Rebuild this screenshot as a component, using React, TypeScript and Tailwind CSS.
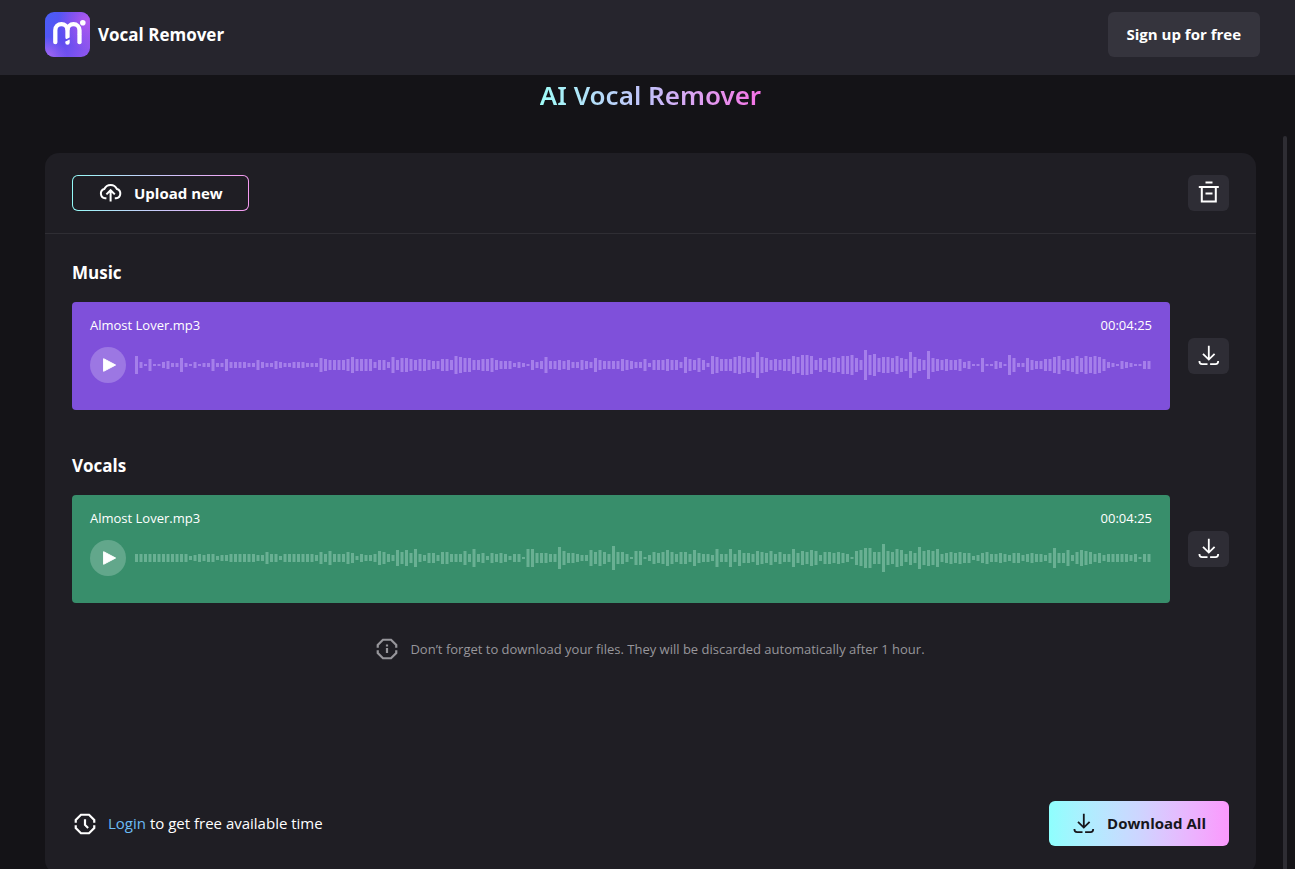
import React from 'react';

const musicLevels = [
  18, 6, 2, 12, 2, 2, 6, 8, 4, 4, 14, 4, 2, 6, 2, 4, 4, 12, 4, 4, 12, 6, 6, 6, 6, 4, 4, 10, 6, 4,
  4, 8, 6, 4, 4, 6, 6, 6, 4, 4, 4, 14, 12, 10, 10, 10, 10, 12, 16, 12, 12, 12, 12, 6, 10, 10, 6, 16, 10, 14,
  14, 12, 10, 12, 12, 10, 8, 8, 12, 12, 10, 18, 16, 14, 14, 10, 10, 12, 12, 14, 10, 8, 8, 8, 4, 6, 4, 2, 10, 6,
  8, 16, 8, 8, 10, 8, 10, 6, 6, 10, 8, 6, 14, 10, 8, 8, 8, 8, 12, 10, 8, 6, 6, 12, 4, 10, 10, 10, 12, 10,
  10, 6, 16, 12, 10, 14, 10, 4, 18, 16, 12, 12, 12, 16, 18, 16, 14, 16, 26, 16, 14, 10, 12, 10, 12, 12, 18, 16, 20, 20,
  18, 10, 14, 10, 14, 16, 14, 18, 18, 20, 14, 10, 30, 20, 22, 14, 16, 16, 14, 18, 14, 12, 26, 16, 12, 10, 28, 14, 12, 10,
  12, 10, 10, 12, 6, 8, 2, 2, 14, 2, 2, 8, 6, 2, 20, 14, 4, 4, 14, 10, 8, 8, 12, 12, 16, 18, 10, 12, 14, 18,
  14, 18, 16, 18, 16, 12, 6, 4, 2, 8, 6, 4, 2, 2, 8, 8,
];

const vocalLevels = [
  8, 8, 8, 8, 8, 8, 8, 8, 8, 8, 8, 8, 4, 6, 8, 6, 8, 8, 4, 6, 6, 8, 8, 8, 8, 8, 8, 6, 6, 12,
  8, 8, 4, 8, 8, 8, 8, 8, 8, 8, 6, 12, 8, 14, 8, 8, 8, 12, 10, 4, 8, 6, 6, 8, 14, 12, 8, 6, 16, 12,
  16, 10, 18, 8, 6, 10, 10, 6, 12, 12, 8, 8, 8, 14, 8, 18, 8, 10, 4, 10, 8, 10, 8, 4, 8, 8, 2, 18, 18, 10,
  10, 10, 8, 8, 22, 14, 10, 10, 8, 6, 6, 16, 12, 16, 12, 8, 24, 12, 12, 8, 2, 14, 14, 2, 6, 12, 10, 12, 16, 12,
  8, 12, 12, 8, 16, 10, 8, 8, 6, 18, 8, 8, 18, 8, 16, 10, 10, 8, 14, 12, 10, 14, 8, 12, 8, 8, 18, 10, 14, 12,
  16, 14, 6, 12, 12, 10, 12, 10, 8, 2, 14, 16, 20, 20, 12, 12, 28, 14, 12, 18, 16, 8, 14, 10, 22, 14, 16, 14, 18, 8,
  10, 12, 10, 12, 10, 10, 4, 6, 10, 12, 8, 8, 10, 8, 6, 10, 10, 6, 8, 10, 8, 8, 6, 10, 20, 10, 10, 16, 6, 12,
  16, 14, 12, 8, 10, 6, 8, 8, 8, 8, 8, 6, 8, 2, 8, 8,
];

const tracks = [
  { title: 'Music', file: 'Almost Lover.mp3', time: '00:04:25', levels: musicLevels, card: 'bg-[#7f50da]', bars: 'text-[#a57fea]', play: 'bg-[#9c77e3]' },
  { title: 'Vocals', file: 'Almost Lover.mp3', time: '00:04:25', levels: vocalLevels, card: 'bg-[#388e6b]', bars: 'text-[#69b093]', play: 'bg-[#62a78b]' },
];

const Logo = () => (
  <svg viewBox="0 0 45 45" className="size-[45px]" aria-hidden="true">
    <defs>
      <linearGradient id="logo-base" x1="0" y1="0.2" x2="1" y2="0.7">
        <stop offset="0" stopColor="#4a5cf6" />
        <stop offset="0.5" stopColor="#5f4df0" />
        <stop offset="1" stopColor="#8a55ee" />
      </linearGradient>
      <radialGradient id="logo-top" cx="0.95" cy="0.2" r="0.65">
        <stop offset="0" stopColor="#b058ee" />
        <stop offset="1" stopColor="#b058ee" stopOpacity="0" />
      </radialGradient>
      <radialGradient id="logo-corner" cx="0.05" cy="1" r="0.45">
        <stop offset="0" stopColor="#a767f2" />
        <stop offset="1" stopColor="#a767f2" stopOpacity="0" />
      </radialGradient>
    </defs>
    <rect width="45" height="45" rx="9" fill="url(#logo-base)" />
    <rect width="45" height="45" rx="9" fill="url(#logo-top)" />
    <rect width="45" height="45" rx="9" fill="url(#logo-corner)" />
    <g fill="none" stroke="#fff" strokeWidth="4.3">
      <path d="M10.3 30.2V18.2a6.1 6.1 0 0 1 12.2 0v7.2" strokeLinecap="round" />
      <path d="M22.5 18.2a6 6 0 0 1 12 0v5" />
      <path d="M34.5 23.8v6.4" strokeLinecap="round" />
    </g>
    <path d="M20.3 29.4l4.4-2v3.2a2.2 2.2 0 0 1-4.4 0z" fill="#fff" />
    <path d="M20 28.6l5-2.6" stroke="#5f4df0" strokeWidth="1.2" />
    <circle cx="37.8" cy="10.7" r="2.8" fill="#fff" />
  </svg>
);

const UploadIcon = () => (
  <svg viewBox="0 0 24 24" className="size-6" fill="none" stroke="currentColor" strokeWidth="2" aria-hidden="true">
    <path d="M8.4 17.2H7.2A4.7 4.7 0 0 1 6.3 8 6.9 6.9 0 0 1 18.9 8a4.7 4.7 0 0 1-.9 9.2h-1.2" />
    <path d="M12.6 20.4V9.8M8.4 13.4l4.2-4.2 4.2 4.2" />
  </svg>
);

const TrashIcon = () => (
  <svg viewBox="0 0 24 24" className="size-6" fill="none" stroke="currentColor" strokeWidth="2" aria-hidden="true">
    <path d="M8.5 1.5h7M1.8 6h20M4.8 6v14.6h14V6M8.5 12.5h7" />
  </svg>
);

const DownloadIcon = () => (
  <svg viewBox="0 0 24 24" className="size-6" fill="none" stroke="currentColor" strokeWidth="1.8" aria-hidden="true">
    <path d="M11.8 1.8v13.4M6 9.8l5.8 5.8 5.8-5.8" />
    <path d="M2.4 17c0 2 .9 3.1 2.7 3.1h5.4M21.2 17c0 2-.9 3.1-2.7 3.1h-5.4" />
  </svg>
);

// the same broken octagon frames the info and the clock icons
const octagon = 'M1.9 10.6V7.6L7.6 1.9h8.8l5.7 5.7v3M1.9 13.4v3l5.7 5.7h8.8l5.7-5.7v-3';

const InfoIcon = () => (
  <svg viewBox="0 0 24 24" className="size-[22px]" fill="none" stroke="currentColor" strokeWidth="2.4" aria-hidden="true">
    <path d={octagon} />
    <path d="M12 11v5.4M12 7v2.4" />
  </svg>
);

const ClockIcon = () => (
  <svg viewBox="0 0 24 24" className="size-[22px]" fill="none" stroke="currentColor" strokeWidth="2.4" aria-hidden="true">
    <path d={octagon} />
    <path d="M12 6.8v6.2l3.4 3.4" />
  </svg>
);

const Waveform = ({ levels, className }: { levels: number[]; className: string }) => (
  <svg viewBox="0 0 1017 36" preserveAspectRatio="none" className={`h-9 min-w-0 flex-1 ${className}`} fill="currentColor" aria-hidden="true">
    {levels.map((level, i) => (
      <rect key={i} x={i * 4.5} y={18 - level / 2} width="3" height={level} />
    ))}
  </svg>
);

const Track = ({ track }: { track: (typeof tracks)[number] }) => (
  <section>
    <h2 className="text-[17px] leading-6 font-bold">{track.title}</h2>
    <div className="mt-[17px] flex items-center gap-[18px]">
      <div className={`h-[108px] min-w-0 flex-1 rounded px-[18px] pt-[13px] ${track.card}`}>
        <div className="flex justify-between text-[13px] leading-5">
          <span>{track.file}</span>
          <span>{track.time}</span>
        </div>
        <div className="mt-3 flex items-center gap-[9px]">
          <button aria-label={`Play ${track.title}`} className={`flex size-9 shrink-0 items-center justify-center rounded-full ${track.play}`}>
            <svg viewBox="0 0 36 36" className="size-9" fill="#fff" stroke="#fff" strokeLinejoin="round" aria-hidden="true">
              <path d="M13.6 11.7v12.6L25.6 18z" />
            </svg>
          </button>
          <Waveform levels={track.levels} className={track.bars} />
        </div>
      </div>
      <button aria-label={`Download ${track.title}`} className="flex h-9 w-[41px] shrink-0 items-center justify-center rounded-md bg-[#2e2d35]">
        <DownloadIcon />
      </button>
    </div>
  </section>
);

const App: React.FC = () => {
  return (
    <div className="flex h-screen flex-col overflow-hidden bg-[#141317] font-['Open_Sans','Noto_Sans',sans-serif] text-white">
      <header className="flex h-[75px] shrink-0 items-start justify-between bg-[#26252d] pt-3 pr-[35px] pl-[45px]">
        <a href="#" className="flex items-center gap-2 text-[17px] font-bold">
          <Logo />
          Vocal Remover
        </a>
        <button className="h-[45px] rounded-md bg-[#35343d] px-[19px] text-[15px] font-bold">Sign up for free</button>
      </header>

      <div className="flex h-[61px] shrink-0 justify-center pt-0.5 pr-[39px] pl-[45px]">
        <h1 className="h-9 bg-linear-to-r from-[#9ffcf8] via-[#c3bffa] to-[#f571e6] bg-clip-text font-['Noto_Sans',sans-serif] text-[26px] leading-9 font-semibold text-transparent">
          AI Vocal Remover
        </h1>
      </div>

      <div className="flex shrink-0 pr-2 pl-[45px]">
        <main className="mt-[17px] flex min-h-[calc(100vh-148px)] min-w-0 flex-1 flex-col rounded-[14px] bg-[#1f1e24]">
          <div className="flex items-center justify-between border-b border-[#2f2e34] px-[27px] py-[22px]">
            <button className="h-9 rounded-md bg-linear-to-r from-[#93fbf8] via-[#c9c8fb] to-[#f59af0] p-px text-[15px] font-bold">
              <span className="flex h-full items-center gap-3 rounded-[5px] bg-[#1f1e24] px-[25px]">
                <UploadIcon />
                Upload new
              </span>
            </button>
            <button aria-label="Delete" className="flex h-9 w-[41px] items-center justify-center rounded-md bg-[#2e2d35]">
              <TrashIcon />
            </button>
          </div>

          <div className="flex flex-col gap-11 px-[27px] pt-[27px]">
            {tracks.map((track) => (
              <Track key={track.title} track={track} />
            ))}
          </div>

          <p className="mt-[34px] flex items-center justify-center gap-3 text-[13px] leading-6 text-[#97969b]">
            <InfoIcon />
            Don’t forget to download your files. They will be discarded automatically after 1 hour.
          </p>

          <footer className="mt-auto flex items-center justify-between px-[27px] pb-7">
            <p className="flex items-center gap-3 pl-0.5 text-[15px]">
              <ClockIcon />
              <span>
                <a href="#" className="text-[#6cbcf5]">Login</a> to get free available time
              </span>
            </p>
            <button className="flex h-[45px] items-center gap-[11px] rounded-md bg-linear-to-r from-[#8efffe] via-[#cdd5ff] to-[#fb98fd] px-[23px] text-[15px] font-bold text-[#17161b]">
              <DownloadIcon />
              Download All
            </button>
          </footer>
        </main>
        <div className="ml-[27px] w-1 rounded-full bg-[#2e2d33]" />
      </div>
    </div>
  );
};

export default App;
